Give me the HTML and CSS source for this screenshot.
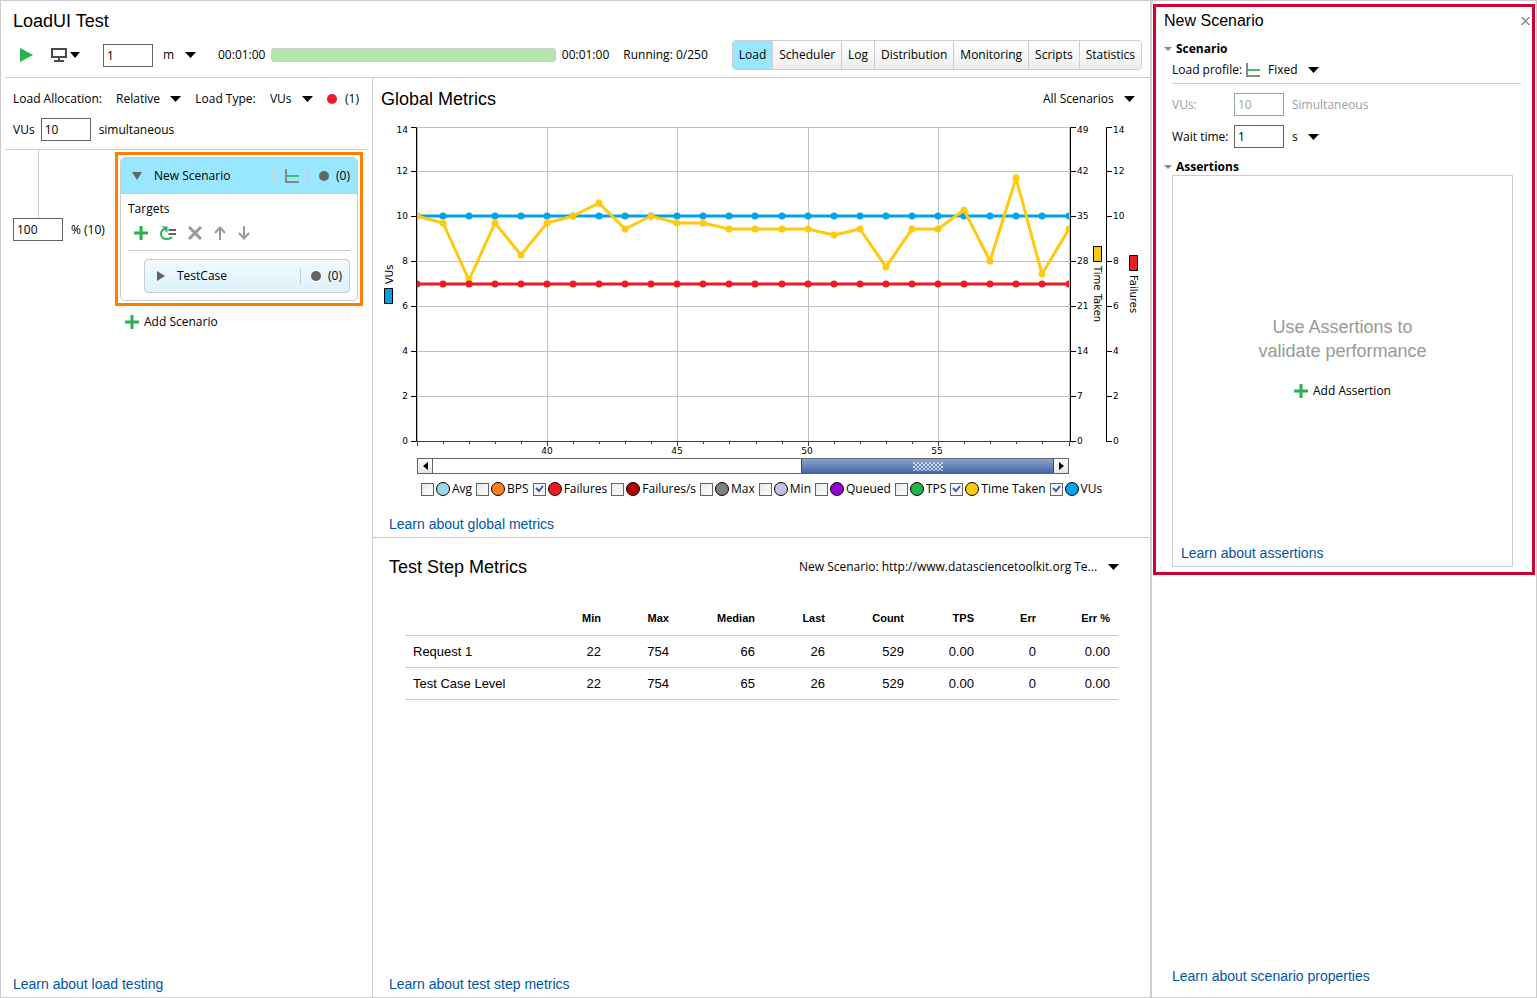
FILE: index.html
```html
<!DOCTYPE html>
<html lang="en">
<head>
<meta charset="utf-8">
<title>LoadUI Test</title>
<link rel="stylesheet" href="styles.css">
</head>
<body>
<svg class="defs" aria-hidden="true">
  <symbol id="plus" viewBox="0 0 14 14"><path d="M7 0v14M0 7h14" stroke="#2bb24c" stroke-width="3" fill="none"/></symbol>
  <symbol id="profile" viewBox="0 0 14 14"><path d="M1 0v13h13" stroke="#878787" stroke-width="2" fill="none"/><path d="M2 7h12" stroke="#44bd70" stroke-width="2"/></symbol>
</svg>
<div class="app">
  <main class="main">
    <header class="top">
      <h1 class="title">LoadUI Test</h1>
      <div class="toolbar">
        <button class="icon-btn play" aria-label="Run"><svg width="13" height="14" viewBox="0 0 13 14"><path d="M0 0L13 7L0 14z" fill="#2bb24c"/></svg></button>
        <button class="icon-btn agent" aria-label="Agents"><svg width="29" height="14" viewBox="0 0 29 14"><path d="M1 1h14v8H1zM8 9v4M3 13h10" fill="none" stroke="#4a4a4a" stroke-width="2"/><path d="M19 4h10l-5 6z"/></svg></button>
        <input class="field" id="limit" aria-label="Duration" value="1">
        <select class="pick unit" aria-label="Duration unit"><option>m</option></select>
        <span class="elapsed">00:01:00</span>
        <div class="progress" role="progressbar" aria-label="Progress"></div>
        <span class="total">00:01:00</span>
        <span class="running">Running: 0/250</span>
        <nav class="tabs">
          <button class="tab active">Load</button><button class="tab">Scheduler</button><button class="tab">Log</button><button class="tab">Distribution</button><button class="tab">Monitoring</button><button class="tab">Scripts</button><button class="tab">Statistics</button>
        </nav>
      </div>
    </header>
    <div class="columns">
      <section class="load">
        <div class="load-head">
          <div class="load-row">
            <label for="alloc">Load Allocation:</label>
            <select class="pick alloc" id="alloc"><option>Relative</option></select>
            <label for="type">Load Type:</label>
            <select class="pick" id="type"><option>VUs</option></select>
            <span class="errors"><i class="dot red"></i>(1)</span>
          </div>
          <div class="vus-row">
            <label for="vus">VUs</label>
            <input class="field" id="vus" value="10">
            <span>simultaneous</span>
          </div>
        </div>
        <div class="tree">
          <div class="share">
            <div class="stem"></div>
            <div class="share-row"><input class="field" id="share" aria-label="Share" value="100"><label for="share">% (10)</label></div>
          </div>
          <div class="branch">
            <div class="highlight">
              <article class="scenario">
                <div class="scenario-head">
                  <svg width="10" height="8" viewBox="0 0 10 8"><path d="M0 0h10L5 8z" fill="#646464"/></svg>
                  <span class="name">New Scenario</span>
                  <span class="cell"><svg width="14" height="14"><use href="#profile"/></svg></span>
                  <span class="cell"><i class="dot"></i>(0)</span>
                </div>
                <div class="scenario-body">
                  <div>Targets</div>
                  <div class="tools">
                    <button class="icon-btn" aria-label="Add target"><svg width="14" height="14"><use href="#plus"/></svg></button>
                    <button class="icon-btn" aria-label="Replace target"><svg width="16" height="14" viewBox="0 0 16 14"><path d="M5.500 2.500C2.500 3.500 1 5.500 1 8C1 11 3.500 13 7 13C9 13 10.500 12.500 12 11" fill="none" stroke="#2bb24c" stroke-width="2"/><path d="M1 0.500h6.500v6.500L5.500 5L4.500 2.500z" fill="#2bb24c"/><path d="M8.500 4h7.500M8.500 8h7.500" stroke="#646464" stroke-width="2"/></svg></button>
                    <button class="icon-btn" aria-label="Delete target"><svg width="14" height="14" viewBox="0 0 14 14"><path d="M1 1L13 13M13 1L1 13" stroke="#999" stroke-width="3"/></svg></button>
                    <button class="icon-btn" aria-label="Move up"><svg width="12" height="14" viewBox="0 0 12 14"><path d="M6 14V2M1 7L6 1.500L11 7" fill="none" stroke="#999" stroke-width="2"/></svg></button>
                    <button class="icon-btn" aria-label="Move down"><svg width="12" height="14" viewBox="0 0 12 14"><path d="M6 0V12M1 7L6 12.500L11 7" fill="none" stroke="#999" stroke-width="2"/></svg></button>
                  </div>
                  <div class="target">
                    <svg width="8" height="10" viewBox="0 0 8 10"><path d="M0 0L8 5L0 10z" fill="#646464"/></svg>
                    <span class="name">TestCase</span>
                    <span class="cell"><i class="dot"></i>(0)</span>
                  </div>
                </div>
              </article>
            </div>
            <button class="add"><svg width="14" height="14"><use href="#plus"/></svg>Add Scenario</button>
          </div>
        </div>
        <a class="learn bottom" href="#">Learn about load testing</a>
      </section>
      <div class="metrics">
        <section class="global">
          <div class="section-head">
            <h2 class="title">Global Metrics</h2>
            <select class="pick" aria-label="Scenario filter"><option>All Scenarios</option></select>
          </div>
          <svg class="chart" viewBox="373 118 777 340" role="img" aria-label="Global metrics chart">
            <defs>
              <clipPath id="plot"><path d="M417 120h652v330H417z"/></clipPath>
              <marker id="mb" markerUnits="userSpaceOnUse" markerWidth="8" markerHeight="8" refX="4" refY="4"><circle cx="4" cy="4" r="3.500" fill="#00a2e8"/></marker>
              <marker id="my" markerUnits="userSpaceOnUse" markerWidth="8" markerHeight="8" refX="4" refY="4"><circle cx="4" cy="4" r="3.500" fill="#ffc90e"/></marker>
              <marker id="mr" markerUnits="userSpaceOnUse" markerWidth="8" markerHeight="8" refX="4" refY="4"><circle cx="4" cy="4" r="3.500" fill="#ed1c24"/></marker>
            </defs>
            <path class="grid" d="M417 127.500h652M417 171.500h652M417 216.500h652M417 261.500h652M417 306.500h652M417 351.500h652M417 396.500h652M417.500 127v314M547.500 127v314M677.500 127v314M808.500 127v314M938.500 127v314M1069.500 127v314"/>
            <path class="axis" d="M411 127.500h5.500v314h-5.500M411 171.500h5M411 216.500h5M411 261.500h5M411 306.500h5M411 351.500h5M411 396.500h5"/>
            <path class="axis" d="M1076 127.500h-5.500v314h5.500M1070 171.500h6M1070 216.500h6M1070 261.500h6M1070 306.500h6M1070 351.500h6M1070 396.500h6"/>
            <path class="axis" d="M1112 127.500h-5.500v314h5.500M1107 171.500h5M1107 216.500h5M1107 261.500h5M1107 306.500h5M1107 351.500h5M1107 396.500h5"/>
            <path class="base" d="M416 441.500h654M417.500 441v5M443.500 441v3M469.500 441v3M495.500 441v3M521.500 441v3M547.500 441v5M573.500 441v3M599.500 441v3M625.500 441v3M651.500 441v3M677.500 441v5M703.500 441v3M729.500 441v3M756.500 441v3M782.500 441v3M808.500 441v5M834.500 441v3M860.500 441v3M886.500 441v3M912.500 441v3M938.500 441v5M964.500 441v3M990.500 441v3M1016.500 441v3M1042.500 441v3M1069.500 441v5"/>
            <g clip-path="url(#plot)">
              <polyline class="line vus" points="417,216 443,216 469,216 495,216 521,216 547,216 573,216 599,216 625,216 651,216 677,216 703,216 729,216 755,216 782,216 808,216 834,216 860,216 886,216 912,216 938,216 964,216 990,216 1016,216 1042,216 1069,216"/>
              <polyline class="line time" points="417,216 443,223 469,280 495,223 521,255 547,223 573,216 599,203 625,229 651,216 677,223 703,223 729,229 755,229 782,229 808,229 834,235 860,229 886,267 912,229 938,229 964,210 990,261 1016,178 1042,274 1069,229"/>
              <polyline class="line fail" points="417,284 443,284 469,284 495,284 521,284 547,284 573,284 599,284 625,284 651,284 677,284 703,284 729,284 755,284 782,284 808,284 834,284 860,284 886,284 912,284 938,284 964,284 990,284 1016,284 1042,284 1069,284"/>
            </g>
            <g class="tick end">
              <text x="408" y="133">14</text><text x="408" y="174">12</text><text x="408" y="219">10</text><text x="408" y="264">8</text><text x="408" y="309">6</text><text x="408" y="354">4</text><text x="408" y="399">2</text><text x="408" y="444">0</text>
            </g>
            <g class="tick">
              <text x="1077" y="133">49</text><text x="1077" y="174">42</text><text x="1077" y="219">35</text><text x="1077" y="264">28</text><text x="1077" y="309">21</text><text x="1077" y="354">14</text><text x="1077" y="399">7</text><text x="1077" y="444">0</text>
              <text x="1113" y="133">14</text><text x="1113" y="174">12</text><text x="1113" y="219">10</text><text x="1113" y="264">8</text><text x="1113" y="309">6</text><text x="1113" y="354">4</text><text x="1113" y="399">2</text><text x="1113" y="444">0</text>
            </g>
            <g class="tick mid">
              <text x="547" y="454">40</text><text x="677" y="454">45</text><text x="807" y="454">50</text><text x="937" y="454">55</text>
            </g>
            <g stroke="#000">
              <path d="M384.500 288.500h8v15h-8z" fill="#00a2e8"/>
              <path d="M1093.500 246.500h8v15h-8z" fill="#ffc90e"/>
              <path d="M1129.500 255.500h8v15h-8z" fill="#ed1c24"/>
            </g>
            <text class="axis-name" transform="translate(393 284) rotate(-90)">VUs</text>
            <text class="axis-name" transform="translate(1094 266) rotate(90)">Time Taken</text>
            <text class="axis-name" transform="translate(1130 275) rotate(90)">Failures</text>
          </svg>
          <div class="scroll">
            <button class="scroll-btn" aria-label="Scroll left"><svg width="5" height="8" viewBox="0 0 5 8"><path d="M5 0v8L0 4z"/></svg></button>
            <div class="track"><div class="thumb"><div class="grip"></div></div></div>
            <button class="scroll-btn" aria-label="Scroll right"><svg width="5" height="8" viewBox="0 0 5 8"><path d="M0 0v8L5 4z"/></svg></button>
          </div>
          <div class="legend">
            <label><input type="checkbox"><i class="swatch avg"></i>Avg</label>
            <label><input type="checkbox"><i class="swatch bps"></i>BPS</label>
            <label><input type="checkbox" checked><i class="swatch failures"></i>Failures</label>
            <label><input type="checkbox"><i class="swatch failures-s"></i>Failures/s</label>
            <label><input type="checkbox"><i class="swatch max"></i>Max</label>
            <label><input type="checkbox"><i class="swatch min"></i>Min</label>
            <label><input type="checkbox"><i class="swatch queued"></i>Queued</label>
            <label><input type="checkbox"><i class="swatch tps"></i>TPS</label>
            <label><input type="checkbox" checked><i class="swatch taken"></i>Time Taken</label>
            <label><input type="checkbox" checked><i class="swatch users"></i>VUs</label>
          </div>
          <a class="learn" href="#">Learn about global metrics</a>
        </section>
        <section class="steps">
          <div class="section-head">
            <h2 class="title">Test Step Metrics</h2>
            <select class="pick" aria-label="Test step source"><option>New Scenario: http://www.datasciencetoolkit.org Te...</option></select>
          </div>
          <table class="table">
            <colgroup><col class="c-name"><col class="c-min"><col class="c-max"><col class="c-median"><col class="c-last"><col class="c-count"><col class="c-tps"><col class="c-err"><col class="c-errp"></colgroup>
            <thead><tr><th></th><th>Min</th><th>Max</th><th>Median</th><th>Last</th><th>Count</th><th>TPS</th><th>Err</th><th>Err %</th></tr></thead>
            <tbody>
              <tr><td>Request 1</td><td>22</td><td>754</td><td>66</td><td>26</td><td>529</td><td>0.00</td><td>0</td><td>0.00</td></tr>
              <tr><td>Test Case Level</td><td>22</td><td>754</td><td>65</td><td>26</td><td>529</td><td>0.00</td><td>0</td><td>0.00</td></tr>
            </tbody>
          </table>
          <a class="learn bottom" href="#">Learn about test step metrics</a>
        </section>
      </div>
    </div>
  </main>
  <aside class="side">
    <div class="inspector">
      <div class="inspector-head">
        <h2 class="title small">New Scenario</h2>
        <button class="icon-btn" aria-label="Close"><svg width="9" height="8" viewBox="0 0 9 8"><path d="M0.500 0L8.500 8M8.500 0L0.500 8" stroke="#8c8c8c" stroke-width="1.500"/></svg></button>
      </div>
      <h3 class="group">Scenario</h3>
      <div class="group-body">
        <div class="profile-row">
          <label for="profile-type">Load profile:</label>
          <svg width="14" height="14"><use href="#profile"/></svg>
          <select class="pick" id="profile-type"><option>Fixed</option></select>
        </div>
        <div class="form-row off">
          <label for="sim">VUs:</label><input class="field" id="sim" value="10" disabled><span>Simultaneous</span>
        </div>
        <div class="form-row">
          <label for="wait">Wait time:</label><input class="field" id="wait" value="1"><select class="pick" aria-label="Wait unit"><option>s</option></select>
        </div>
      </div>
      <h3 class="group">Assertions</h3>
      <div class="assertions">
        <div class="empty">
          <p class="hint">Use Assertions to<br>validate performance</p>
          <button class="add"><svg width="14" height="14"><use href="#plus"/></svg>Add Assertion</button>
        </div>
        <a class="learn" href="#">Learn about assertions</a>
      </div>
    </div>
    <a class="learn bottom" href="#">Learn about scenario properties</a>
  </aside>
</div>
</body>
</html>
```
FILE: styles.css
```css
* { box-sizing: border-box; }
body {
  margin: 0;
  background: #fff;
  color: #000;
  font: 12px/16px "Open Sans", "Noto Sans", sans-serif;
}
button, input, select { font: inherit; color: inherit; margin: 0; }
svg { display: block; flex: none; }
.defs { position: absolute; width: 0; height: 0; }
.app {
  display: flex;
  min-height: 100vh;
  border: 1px solid #ccc;
}
.main { flex: 1; min-width: 0; display: flex; flex-direction: column; }
.title { margin: 0; font: 18px/24px "Liberation Sans", Arial, sans-serif; }
.title.small { font-size: 16px; }
.learn { font: 14px/18px "Liberation Sans", Arial, sans-serif; color: #0054a6; text-decoration: none; }
.bottom { margin-top: auto; }
.icon-btn { display: flex; padding: 0; border: 0; background: none; }
.add { display: flex; align-items: center; gap: 5px; padding: 0; border: 0; background: none; }
.field {
  width: 50px;
  height: 23px;
  padding: 0 3px;
  border: 1px solid #646464;
  border-radius: 0;
  background: #fff;
}
.pick {
  appearance: none;
  border: 0;
  border-radius: 0;
  padding: 0 21px 0 0;
  background: url("data:image/svg+xml,%3Csvg xmlns='http://www.w3.org/2000/svg' width='11' height='6'%3E%3Cpath d='M0 0h11L5.500 6z'/%3E%3C/svg%3E") no-repeat right center;
}
.dot { width: 10px; height: 10px; border-radius: 50%; background: #646464; }
.dot.red { background: #ed1c24; }

/* Toolbar */
.top { margin-left: 4px; padding: 8px 8px 7px; border-bottom: 1px solid #ccc; }
.toolbar { display: flex; align-items: center; margin-top: 7px; padding-left: 7px; }
.agent { margin: 0 23px 0 18px; }
.unit { margin-left: 10px; margin-right: 22px; }
.progress { flex: 1; height: 14px; margin: 0 6px; border: 1px solid #ccc; border-radius: 3px; background: #b5e6ac; }
.running { margin: 0 24px 0 14px; }
.tabs { display: flex; border: 1px solid #ccc; border-radius: 4px; overflow: hidden; }
.tab { height: 28px; padding: 0 6px; border: 0; border-left: 1px solid #ccc; background: linear-gradient(#fff, #eee); }
.tab.active { border-left: 0; background: #99e6ff; }

/* Load column */
.columns { flex: 1; display: flex; }
.load { width: 371px; flex: none; display: flex; flex-direction: column; padding: 0 5px 4px 4px; }
.load-head { padding: 13px 8px 8px; border-bottom: 1px solid #ccc; }
.load-row, .vus-row { display: flex; align-items: center; }
.load-row { justify-content: space-between; }
.errors { display: flex; align-items: center; gap: 8px; }
.vus-row { gap: 6px; margin-top: 11px; }
.vus-row span { margin-left: 2px; }
.tree { display: flex; }
.share { width: 110px; flex: none; padding-left: 8px; }
.stem { width: 1px; height: 68px; margin-left: 25px; background: #ccc; }
.share-row { display: flex; align-items: center; gap: 8px; }
.branch { flex: 1; padding: 2px 4px 0 0; }
.highlight { padding: 2px; border: 3px solid #ff8000; }
.scenario { border: 1px solid #ccc; border-radius: 5px; overflow: hidden; }
.scenario-head { display: flex; align-items: center; height: 36px; padding: 0 7px 0 11px; background: #99e6ff; border-bottom: 1px solid #ccc; }
.name { flex: 1; padding-left: 12px; }
.cell { display: flex; align-items: center; gap: 7px; height: 16px; padding-left: 10px; border-left: 1px solid #ccc; }
.cell + .cell { margin-left: 9px; }
.scenario-body { padding: 7px; }
.tools { display: flex; align-items: center; gap: 12px; padding: 9px 5px 10px 6px; border-bottom: 1px solid #ccc; }
.target { display: flex; align-items: center; height: 34px; margin: 8px 0 0 16px; padding: 0 7px 0 12px; border: 1px solid #ccc; border-radius: 4px; background: linear-gradient(#f2faff, #dcf1fa); }
.branch > .add { margin: 8px 0 0 10px; }
.load > .learn { margin-left: 8px; }

/* Metrics */
.metrics { flex: 1; min-width: 0; display: flex; flex-direction: column; border-left: 1px solid #ccc; }
.section-head { display: flex; align-items: center; justify-content: space-between; }
.global { border-bottom: 1px solid #ccc; padding-bottom: 4px; }
.global .section-head { padding: 9px 15px 0 8px; }
.chart { width: 100%; margin-top: 7px; }
.grid { fill: none; stroke: #c0c0c0; }
.axis { fill: none; stroke: #000; }
.base { fill: none; stroke: #404040; }
.line { fill: none; stroke-width: 3; }
.vus { stroke: #00a2e8; marker: url(#mb); }
.time { stroke: #ffc90e; marker: url(#my); }
.fail { stroke: #ed1c24; marker: url(#mr); }
.tick, .axis-name { font: 9px "DejaVu Sans", sans-serif; }
.axis-name { font-size: 10px; }
.end { text-anchor: end; }
.mid { text-anchor: middle; }
.scroll { display: flex; height: 16px; margin: 0 81px 0 44px; border: 1px solid #646464; }
.scroll-btn { display: grid; place-items: center; width: 14px; padding: 0; border: 0; background: linear-gradient(#fff, #e4e4e4); }
.track { flex: 1; display: flex; justify-content: flex-end; border-left: 1px solid #646464; }
.thumb { display: grid; place-items: center; width: 253px; border: 1px solid #2a4a8a; border-width: 0 1px; background: linear-gradient(#8aa4cc, #4467a4); }
.grip { width: 30px; height: 9px; background: radial-gradient(circle at 1px 1px, #c8d8f4 1px, transparent 1px) 0 0 / 4px 4px, radial-gradient(circle at 1px 1px, #c8d8f4 1px, transparent 1px) 2px 2px / 4px 4px; }
.legend { display: flex; flex-wrap: wrap; gap: 4px; margin: 7px 40px 0 48px; }
.legend label { display: flex; align-items: center; gap: 2px; }
.legend input { appearance: none; width: 13px; height: 13px; border: 1px solid #646464; background: linear-gradient(135deg, #e8e8e8, #fff); }
.legend input:checked { background: #f4f6fb url("data:image/svg+xml,%3Csvg xmlns='http://www.w3.org/2000/svg' width='9' height='8'%3E%3Cpath d='M1 3L4 6L8 1' fill='none' stroke='%233c5a9a' stroke-width='2'/%3E%3C/svg%3E") no-repeat center; }
.swatch { width: 14px; height: 14px; border: 1px solid #000; border-radius: 50%; }
.avg { background: #99d9ea; }
.bps { background: #ff7f27; }
.failures { background: #ed1c24; }
.failures-s { background: #b00000; }
.max { background: #7f7f7f; }
.min { background: #c8bfe7; }
.queued { background: #9400d3; }
.tps { background: #22b14c; }
.taken { background: #ffc90e; }
.users { background: #00a2e8; }
.global > .learn { display: block; margin: 18px 16px 0; }
.steps { flex: 1; display: flex; flex-direction: column; padding: 17px 31px 4px 16px; }
.table { table-layout: fixed; width: calc(100% - 17px); margin: 24px 0 0 16px; border-collapse: collapse; font: 13px/15px "Liberation Sans", Arial, sans-serif; }
.table th, .table td { height: 32px; padding: 0 8px; border-bottom: 1px solid #ccc; text-align: right; }
.table th { font-size: 11px; }
.table td:first-child { text-align: left; white-space: nowrap; }
.c-name { width: 136px; }
.c-min, .c-max { width: 68px; }
.c-median { width: 86px; }
.c-last, .c-tps { width: 70px; }
.c-count { width: 79px; }
.c-err { width: 62px; }
.c-errp { width: 74px; }

/* Inspector */
.side { width: 386px; flex: none; display: flex; flex-direction: column; border-left: 2px solid #ccc; padding: 3px 1px 12px; }
.inspector { border: 3px solid #cc0033; padding: 2px 2px 5px 8px; }
.inspector-head { display: flex; align-items: center; justify-content: space-between; }
.group { display: flex; align-items: center; gap: 4px; margin: 8px 0 0; font-size: 12px; line-height: 16px; }
.group::before { content: ""; border: 4px solid transparent; border-top-color: #8c8c8c; border-bottom-width: 0; }
.group-body { margin: 0 9px 0 8px; padding-bottom: 3px; }
.profile-row { display: flex; align-items: center; gap: 4px; height: 27px; border-bottom: 1px solid #ccc; }
.profile-row .pick { margin-left: 4px; }
.form-row { display: flex; align-items: center; gap: 8px; margin-top: 9px; }
.form-row label { width: 54px; white-space: nowrap; }
.off { color: #a0a0a0; }
.off .field { border-color: #a0a0a0; }
.assertions { display: flex; flex-direction: column; height: 392px; margin: 0 17px 0 8px; padding: 4px 8px; border: 1px solid #ccc; }
.empty { flex: 1; display: flex; flex-direction: column; align-items: center; justify-content: center; gap: 20px; padding-bottom: 10px; }
.hint { margin: 0; text-align: center; color: #999; font: 18px/24px "Liberation Sans", Arial, sans-serif; }
.side > .learn { margin-left: 19px; }
```
